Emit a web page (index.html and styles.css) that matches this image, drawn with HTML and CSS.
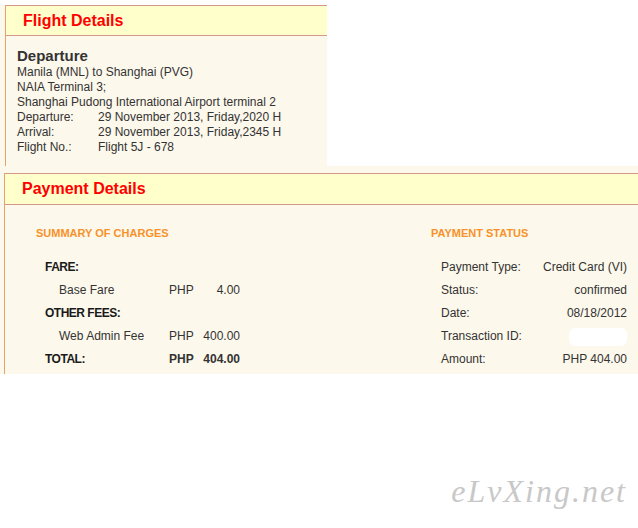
FILE: index.html
```html
<!DOCTYPE html>
<html lang="en">
<head>
    <meta charset="UTF-8">
    <meta name="viewport" content="width=device-width, initial-scale=1.0">
    <title>Flight Details</title>
    <link rel="stylesheet" href="styles.css">
</head>
<body>
    <div class="panel flight">
        <div class="panel-inner">
            <h2 class="panel-title">Flight Details</h2>
            <div class="flight-body">
                <h3 class="leg">Departure</h3>
                <p class="line">Manila (MNL) to Shanghai (PVG)</p>
                <p class="line">NAIA Terminal 3;</p>
                <p class="line">Shanghai Pudong International Airport terminal 2</p>
                <div class="facts">
                    <span>Departure:</span><span>29 November 2013, Friday,2020 H</span>
                    <span>Arrival:</span><span>29 November 2013, Friday,2345 H</span>
                    <span>Flight No.:</span><span>Flight 5J - 678</span>
                </div>
            </div>
        </div>
    </div>

    <div class="panel payment">
        <div class="panel-inner">
            <h2 class="panel-title">Payment Details</h2>
            <div class="payment-body">
                <div class="summary">
                    <h4 class="sub-title">SUMMARY OF CHARGES</h4>
                    <div class="charges">
                        <span class="group">FARE:</span><span></span><span></span>
                        <span class="item">Base Fare</span><span>PHP</span><span class="amt">4.00</span>
                        <span class="group">OTHER FEES:</span><span></span><span></span>
                        <span class="item">Web Admin Fee</span><span>PHP</span><span class="amt">400.00</span>
                        <span class="group">TOTAL:</span><span class="strong">PHP</span><span class="amt strong">404.00</span>
                    </div>
                </div>
                <div class="status">
                    <h4 class="sub-title">PAYMENT STATUS</h4>
                    <div class="status-rows">
                        <span>Payment Type:</span><span class="val">Credit Card (VI)</span>
                        <span>Status:</span><span class="val">confirmed</span>
                        <span>Date:</span><span class="val">08/18/2012</span>
                        <span>Transaction ID:</span><span class="val"><span class="masked"></span></span>
                        <span>Amount:</span><span class="val">PHP 404.00</span>
                    </div>
                </div>
            </div>
        </div>
    </div>

    <div class="watermark">eLvXing.net</div>
</body>
</html>
```

FILE: styles.css
```css
body {
    margin: 0;
    background: #fff;
    font-family: 'Liberation Sans', Arial, sans-serif;
    font-size: 12px;
    color: #333;
}
.panel {
    background: #fdf8ec;
}
.panel.flight {
    width: 322px;
    padding-left: 5px;
}
.panel.payment {
    padding-left: 4px;
    padding-top: 7px;
}
.panel-inner {
    border-left: 1px solid #e4a36c;
}
.panel-title {
    margin: 0;
    background: #ffffcc;
    border-top: 1px solid #d4988a;
    border-bottom: 1px solid #d4988a;
    color: #ff0000;
    font-size: 16px;
    font-weight: bold;
    height: 29px;
    line-height: 29px;
    padding-left: 17px;
}
.flight .panel-title {
    margin-top: 5px;
}
.payment .panel-title {
    height: 30px;
    line-height: 30px;
    padding-left: 17px;
}
.flight-body {
    padding: 11px 0 11px 11px;
    line-height: 15px;
}
.leg {
    margin: 0;
    font-size: 15px;
    line-height: 18px;
    font-weight: bold;
}
.line {
    margin: 0;
}
.facts {
    display: grid;
    grid-template-columns: 81px auto;
}

/* payment */
.payment-body {
    display: flex;
    padding: 22px 11px 3px 31px;
}
.summary {
    width: 395px;
}
.status {
    flex: 1;
}
.sub-title {
    margin: 0 0 16px;
    color: #f7922a;
    font-size: 11px;
    line-height: 13px;
    font-weight: bold;
}
.charges {
    display: grid;
    grid-template-columns: 124px 24px 47px;
    padding-left: 9px;
    line-height: 23px;
}
.charges .group {
    font-weight: bold;
    font-size: 12px;
    letter-spacing: -0.5px;
    color: #1a1a1a;
}
.charges .item {
    padding-left: 14px;
}
.charges .amt {
    text-align: right;
}
.charges .strong {
    font-weight: bold;
}
.status-rows {
    display: grid;
    grid-template-columns: 1fr auto;
    padding-left: 10px;
    line-height: 23px;
}
.status-rows .val {
    text-align: right;
}
.masked {
    display: inline-block;
    width: 58px;
    height: 18px;
    background: #fff;
    border-radius: 6px;
    vertical-align: middle;
}
.watermark {
    margin-top: 99px;
    padding-right: 11px;
    text-align: right;
    font-family: 'Liberation Serif', serif;
    font-style: italic;
    font-size: 32px;
    line-height: 36px;
    color: #c8c8c8;
    letter-spacing: 2px;
}
```
